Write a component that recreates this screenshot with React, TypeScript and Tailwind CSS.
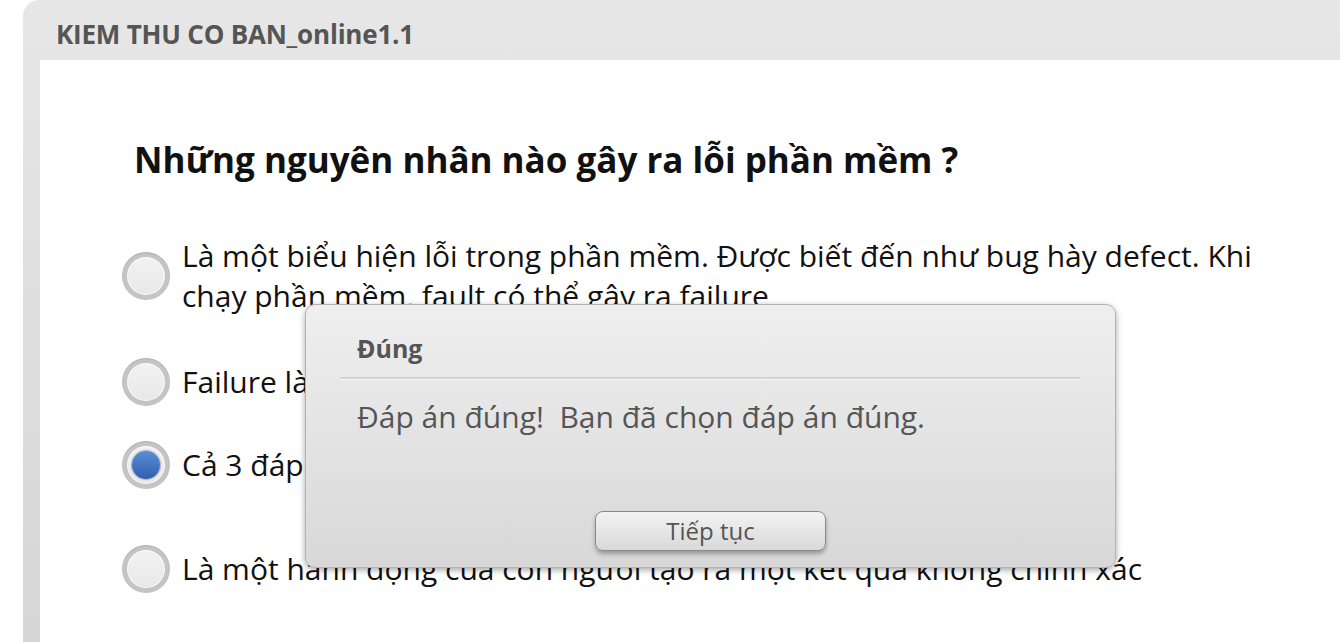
import React from "react";

const font = { fontFamily: '"Open Sans", "Noto Sans", sans-serif' };

function Radio({ checked }: { checked?: boolean }) {
  return (
    <div className="w-[48px] h-[48px] rounded-full bg-[#c4c4c4] flex items-center justify-center shrink-0 shadow-[inset_0_1px_1px_rgba(0,0,0,0.1)]">
      <div className="w-[38px] h-[38px] rounded-full bg-[#fafafa] flex items-center justify-center">
        <div className="w-[36px] h-[36px] rounded-full bg-gradient-to-b from-[#f2f2f2] to-[#e8e8e8] flex items-center justify-center">
          {checked && (
            <div className="w-[28px] h-[28px] rounded-full bg-gradient-to-b from-[#5b8ed6] to-[#2f5fae] shadow-[0_0_1px_1px_rgba(30,60,120,0.35)]" />
          )}
        </div>
      </div>
    </div>
  );
}

function Option({ text, checked, className }: { text: string; checked?: boolean; className?: string }) {
  return (
    <div className={"flex items-center gap-[12px] " + (className || "")}>
      <Radio checked={checked} />
      <div className="text-[30px] leading-[40px] text-[#111]">{text}</div>
    </div>
  );
}

export default function App() {
  return (
    <div className="w-[1340px] h-[642px] bg-white overflow-hidden relative" style={font}>
      <div className="ml-[23px] h-[642px] rounded-tl-[16px] bg-gradient-to-b from-[#e7e7e7] to-[#d6d6d6] flex flex-col">
        <div className="h-[60px] pl-[33px] pt-[8px] flex items-center shrink-0">
          <div className="text-[26px] font-bold text-[#555] tracking-[-0.2px]">KIEM THU CO BAN_online1.1</div>
        </div>
        <div className="ml-[17px] flex-1 bg-white pl-[82px] pr-[40px] pt-[78px]">
          <div className="pl-[12px] text-[35px] font-bold text-[#111] leading-[44px]">
            Những nguyên nhân nào gây ra lỗi phần mềm ?
          </div>
          <div className="mt-[54px] flex flex-col">
            <Option text="Là một biểu hiện lỗi trong phần mềm. Được biết đến như bug hày defect. Khi chạy phần mềm, fault có thể gây ra failure" />
            <Option className="mt-[42px]" text="Failure là sự khác biệt giữa kết quả thực tế và kết quả mong đợi" />
            <Option className="mt-[35px]" checked text="Cả 3 đáp án trên" />
            <Option className="mt-[56px]" text="Là một hành động của con người tạo ra một kết quả không chính xác" />
          </div>
        </div>
      </div>

      <div className="absolute left-[305px] top-[304px] w-[811px] h-[264px] rounded-[10px] border border-[#b3b3b3] bg-gradient-to-b from-[#efefef] to-[#d8d8d8] shadow-[0_2px_6px_rgba(0,0,0,0.35)] flex flex-col">
        <div className="pl-[51px] pt-[26px] text-[25px] font-bold text-[#555] leading-[34px]">Đúng</div>
        <div className="mx-[35px] mt-[12px] h-[3px] bg-[#d4d4d4] border-b border-[#fafafa]" />
        <div className="pl-[51px] mt-[17px] text-[30px] text-[#555] leading-[40px] whitespace-pre">
          {"Đáp án đúng!  Bạn đã chọn đáp án đúng."}
        </div>
        <div className="flex-1" />
        <div className="flex justify-center mb-[16px]">
          <button className="w-[231px] h-[40px] rounded-[8px] border border-[#8a8a8a] bg-gradient-to-b from-[#f3f3f3] to-[#d9d9d9] shadow-[0_3px_4px_rgba(0,0,0,0.3)] text-[24px] text-[#555] leading-[38px]">
            Tiếp tục
          </button>
        </div>
      </div>
    </div>
  );
}
